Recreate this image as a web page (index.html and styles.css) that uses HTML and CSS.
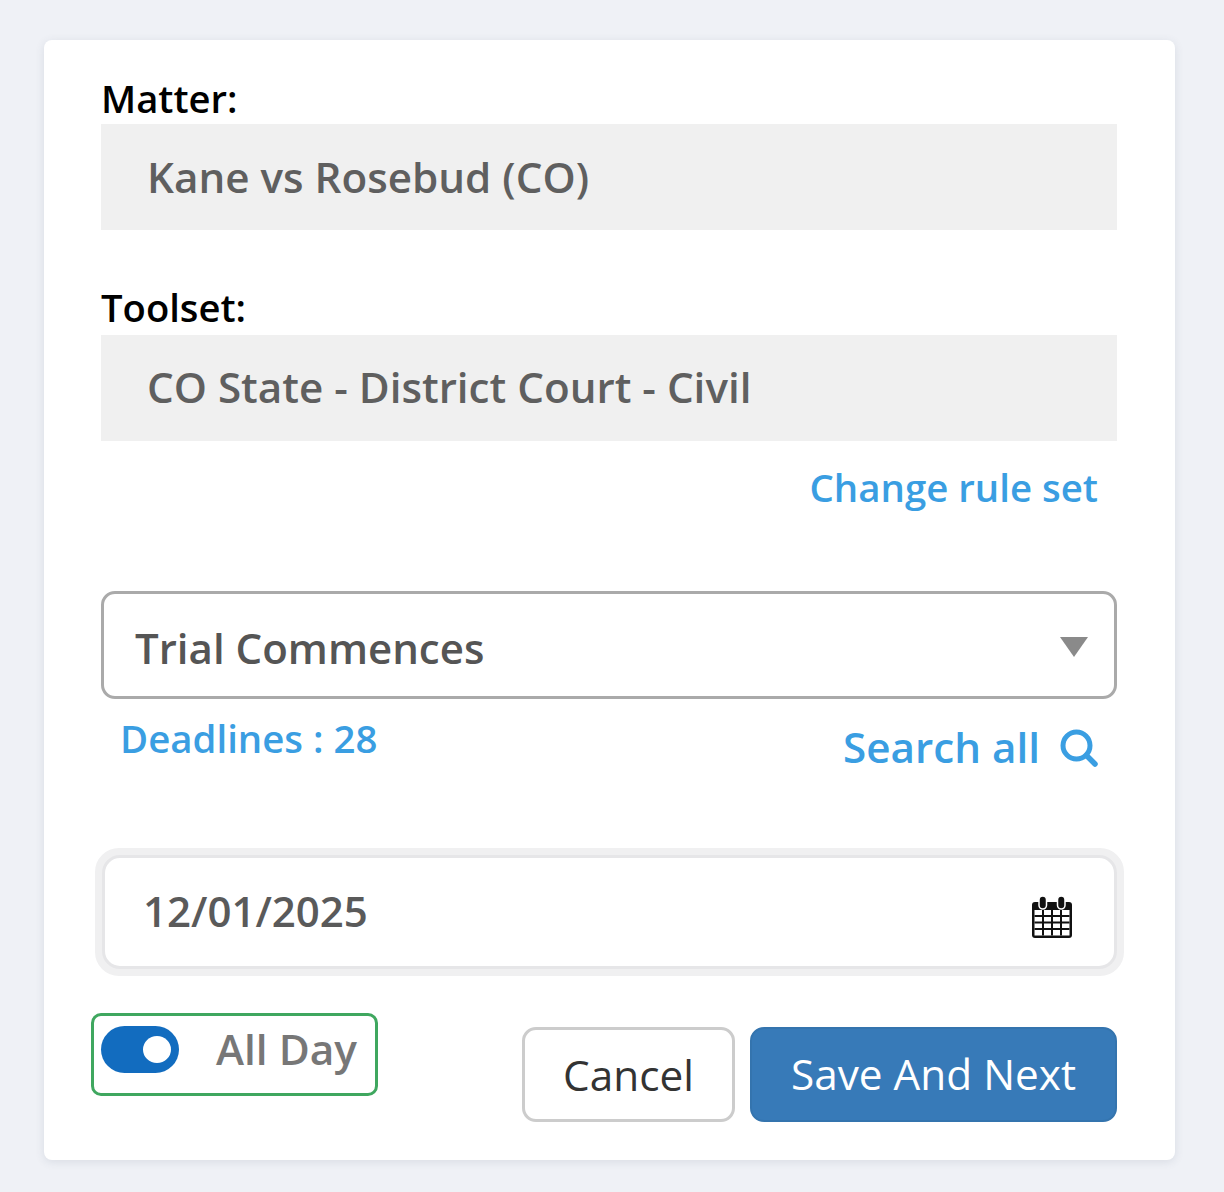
FILE: index.html
```html
<!DOCTYPE html>
<html lang="en">
<head>
<meta charset="UTF-8">
<meta name="viewport" content="width=device-width, initial-scale=1.0">
<title>Add Deadline</title>
<link rel="stylesheet" href="styles.css">
</head>
<body>

<div class="card">
  <div class="field-label">Matter:</div>
  <div class="readonly-field">Kane vs Rosebud (CO)</div>

  <div class="field-label toolset-label">Toolset:</div>
  <div class="readonly-field toolset-field">CO State - District Court - Civil</div>

  <div class="rule-row">
    <a href="#" class="link">Change rule set</a>
  </div>

  <!-- Trigger select -->
  <div class="select-box">
    <span class="select-text">Trial Commences</span>
    <span class="select-arrow"></span>
  </div>

  <div class="search-row">
    <a href="#" class="link deadlines">Deadlines : 28</a>
    <a href="#" class="link search-all">
      <span class="search-text">Search all</span>
      <svg class="search-icon" viewBox="0 0 40 40" width="40" height="40">
        <circle cx="17.5" cy="17.5" r="13.5" fill="none" stroke="#3a9ee2" stroke-width="5"/>
        <path d="M27.5 27.5 L36 36" fill="none" stroke="#3a9ee2" stroke-width="5.5" stroke-linecap="round"/>
      </svg>
    </a>
  </div>

  <!-- Date input -->
  <div class="date-outer">
    <div class="date-input">
      <span class="date-text">12/01/2025</span>
      <svg class="calendar-icon" viewBox="0 0 40 42" width="40" height="42">
        <path d="M3 6 H37 Q40 6 40 9 V39 Q40 42 37 42 H3 Q0 42 0 39 V9 Q0 6 3 6 Z" fill="#111"/>
        <rect x="2.5" y="14" width="35" height="25.5" fill="#fff"/>
        <path d="M2.5 20 H37.5 M2.5 26.5 H37.5 M2.5 33 H37.5 M11 14 V39.5 M20 14 V39.5 M29 14 V39.5" stroke="#111" stroke-width="2" fill="none"/>
        <rect x="7" y="0" width="7.5" height="13" rx="3.75" fill="#111" stroke="#fff" stroke-width="1.5"/>
        <rect x="25.5" y="0" width="7.5" height="13" rx="3.75" fill="#111" stroke="#fff" stroke-width="1.5"/>
      </svg>
    </div>
  </div>

  <div class="bottom-row">
    <div class="toggle-box">
      <span class="toggle"><span class="toggle-knob"></span></span>
      <span class="toggle-text">All Day</span>
    </div>
    <div class="buttons">
      <a href="#" class="button button-cancel">Cancel</a>
      <a href="#" class="button button-save">Save And Next</a>
    </div>
  </div>
</div>

</body>
</html>
```

FILE: styles.css
```css
/* General Styles */
body {
  font-family: "Open Sans", sans-serif;
  margin: 0;
  padding: 40px 49px 32px 44px;
  background-color: #eff1f6;
}

.card {
  height: 1120px;
  box-sizing: border-box;
  padding: 37px 58px 0 57px;
  background-color: #fff;
  border-radius: 8px;
  box-shadow: 0 2px 10px rgba(60, 70, 100, 0.12);
}

/* Read only fields */
.field-label {
  height: 47px;
  font-size: 38.2px;
  font-weight: 600;
  line-height: 43px;
  color: #000;
}

.toolset-label {
  height: 50px;
  margin-top: 55px;
  line-height: 45px;
}

.readonly-field {
  height: 106px;
  padding-left: 46px;
  font-size: 42.2px;
  font-weight: 600;
  line-height: 106px;
  color: #5f5f5f;
  background-color: #f0f0f0;
}

.toolset-field {
  line-height: 103px;
}

.link {
  color: #3a9ee2;
  font-weight: 600;
  text-decoration: none;
}

.rule-row {
  height: 150px;
  padding: 19px 19px 0 0;
  box-sizing: border-box;
  text-align: right;
  font-size: 38.4px;
  line-height: 54px;
}

/* Select */
.select-box {
  display: flex;
  justify-content: space-between;
  align-items: center;
  height: 108px;
  box-sizing: border-box;
  padding: 0 26px 0 31px;
  border: 3px solid #aaa;
  border-radius: 14px;
  font-size: 42px;
  font-weight: 600;
  color: #555;
}

.select-text {
  margin-top: 4px;
}

.select-arrow {
  width: 0;
  height: 0;
  margin-top: 4px;
  border-left: 14px solid transparent;
  border-right: 14px solid transparent;
  border-top: 20px solid #8a8a8a;
}

.search-row {
  display: flex;
  justify-content: space-between;
  height: 149px;
  padding: 13px 18px 0 19px;
  box-sizing: border-box;
}

.deadlines {
  font-size: 38.4px;
  line-height: 52px;
}

.search-all {
  display: flex;
  align-items: center;
  gap: 19px;
  height: 72px;
  font-size: 42.2px;
}

.search-text {
  margin-bottom: 3px;
}

.search-icon {
  flex-shrink: 0;
}

/* Date */
.date-outer {
  margin: 0 -7px 0 -6px;
  padding: 5px;
  border: 2px solid #f0f0f1;
  border-radius: 24px;
  background-color: #f0f0f1;
}

.date-input {
  display: flex;
  justify-content: space-between;
  align-items: center;
  height: 114px;
  box-sizing: border-box;
  padding: 0 42px 0 38px;
  border: 3px solid #e6e6e8;
  border-radius: 18px;
  background-color: #fff;
  font-size: 42px;
  font-weight: 600;
  color: #5a5a5a;
}

.date-text {
  margin-bottom: 4px;
}

.calendar-icon {
  flex-shrink: 0;
  margin-top: 10px;
}

/* Toggle and buttons */
.bottom-row {
  display: flex;
  justify-content: space-between;
  align-items: flex-start;
  margin: 37px 0 0 -10px;
}

.toggle-box {
  display: flex;
  align-items: center;
  gap: 37px;
  width: 287px;
  height: 83px;
  box-sizing: border-box;
  padding: 0 0 11px 7px;
  border: 3px solid #3fa75f;
  border-radius: 10px;
}

.toggle {
  display: block;
  position: relative;
  width: 78px;
  height: 47px;
  border-radius: 24px;
  background-color: #126cbf;
}

.toggle-knob {
  position: absolute;
  top: 10px;
  right: 8px;
  width: 28px;
  height: 27px;
  border-radius: 50%;
  background-color: #fff;
}

.toggle-text {
  margin-bottom: 2px;
  font-size: 42.4px;
  font-weight: 600;
  color: #777;
}

.buttons {
  display: flex;
  gap: 15px;
  margin-top: 14px;
}

.button {
  display: block;
  height: 95px;
  box-sizing: border-box;
  border-radius: 14px;
  font-size: 42.3px;
  line-height: 89px;
  text-align: center;
  text-decoration: none;
}

.button-cancel {
  width: 213px;
  border: 3px solid #ccc;
  color: #333;
  background-color: #fff;
}

.button-save {
  width: 367px;
  border: 2px solid #3474ae;
  color: #fff;
  background-color: #377ab8;
}
```
